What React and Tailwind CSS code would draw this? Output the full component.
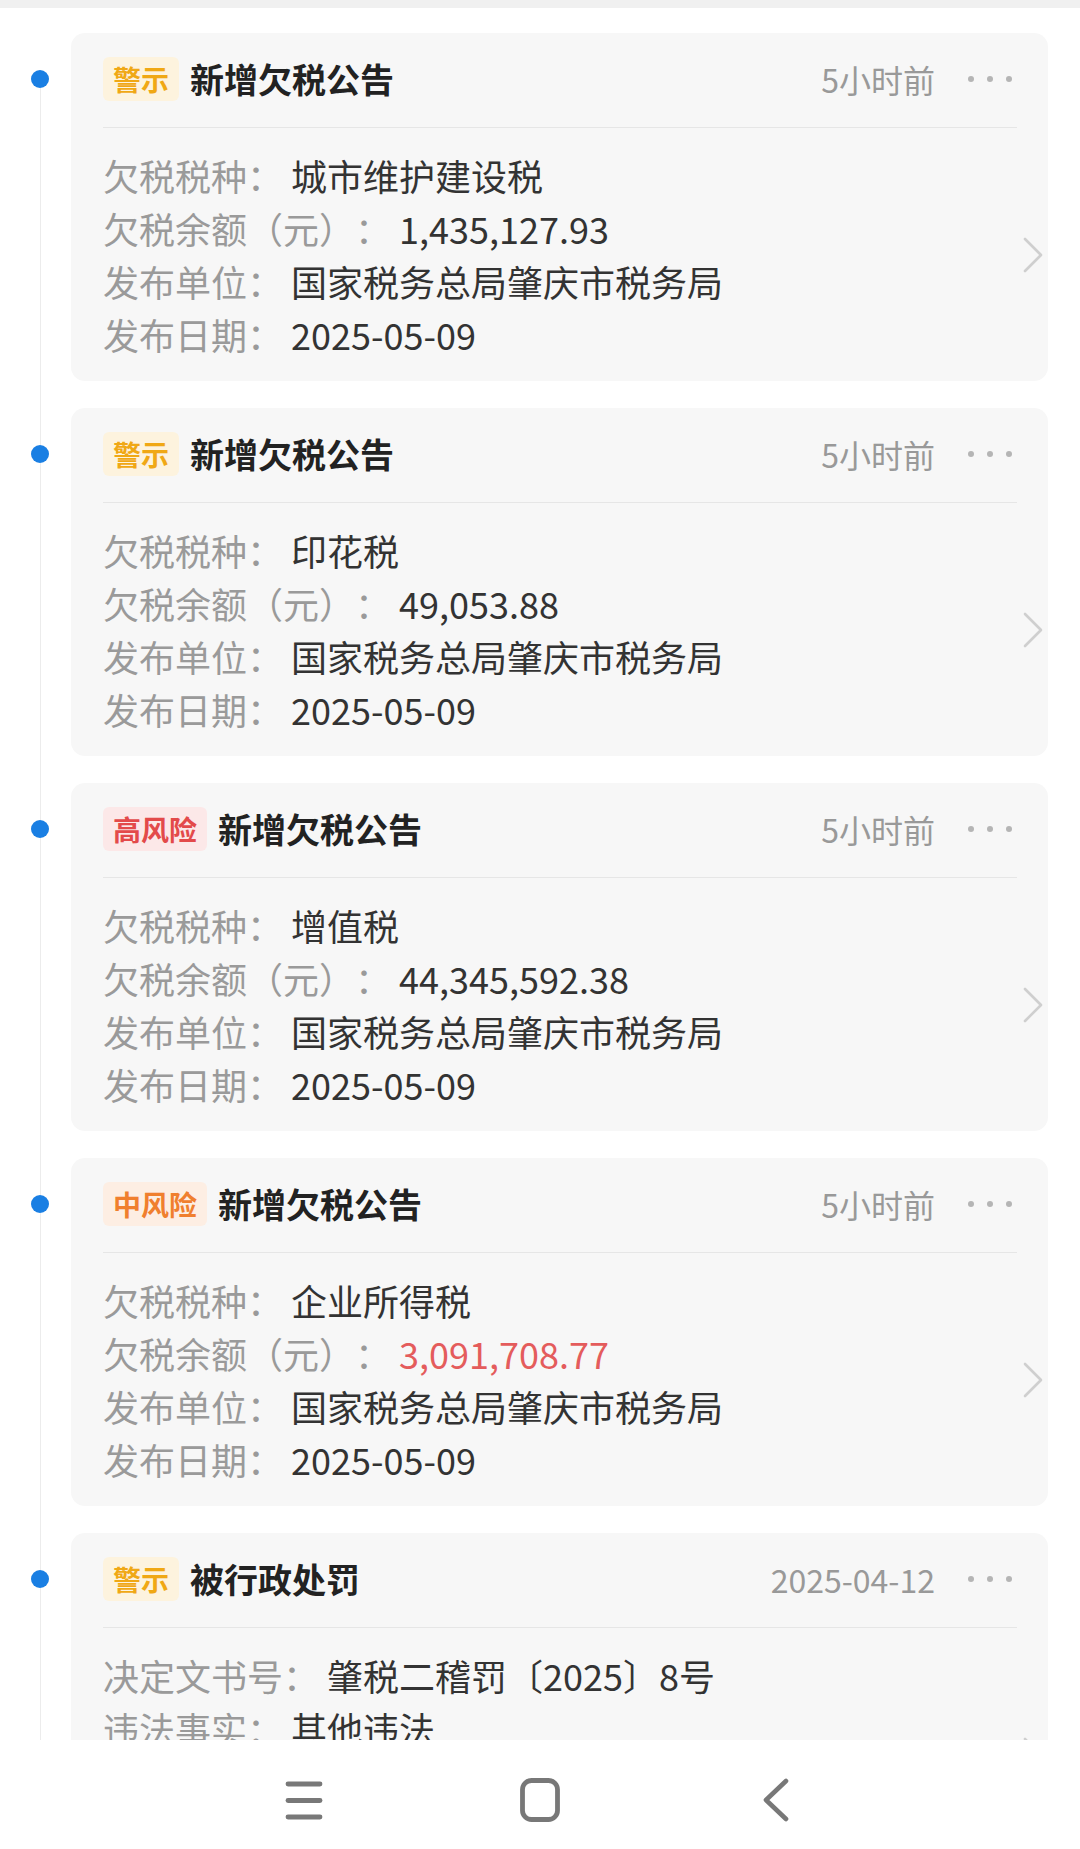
const tagStyles = {
  warn: "bg-[#fdf3de] text-[#f0a815]",
  high: "bg-[#fce8e8] text-[#e34a4a]",
  mid: "bg-[#fdeee3] text-[#f07f2e]",
};

const records = [
  {
    tag: "警示",
    tone: "warn",
    title: "新增欠税公告",
    time: "5小时前",
    rows: [
      ["欠税税种", "城市维护建设税"],
      ["欠税余额（元）", "1,435,127.93"],
      ["发布单位", "国家税务总局肇庆市税务局"],
      ["发布日期", "2025-05-09"],
    ],
  },
  {
    tag: "警示",
    tone: "warn",
    title: "新增欠税公告",
    time: "5小时前",
    rows: [
      ["欠税税种", "印花税"],
      ["欠税余额（元）", "49,053.88"],
      ["发布单位", "国家税务总局肇庆市税务局"],
      ["发布日期", "2025-05-09"],
    ],
  },
  {
    tag: "高风险",
    tone: "high",
    title: "新增欠税公告",
    time: "5小时前",
    rows: [
      ["欠税税种", "增值税"],
      ["欠税余额（元）", "44,345,592.38"],
      ["发布单位", "国家税务总局肇庆市税务局"],
      ["发布日期", "2025-05-09"],
    ],
  },
  {
    tag: "中风险",
    tone: "mid",
    title: "新增欠税公告",
    time: "5小时前",
    rows: [
      ["欠税税种", "企业所得税"],
      ["欠税余额（元）", "3,091,708.77", true],
      ["发布单位", "国家税务总局肇庆市税务局"],
      ["发布日期", "2025-05-09"],
    ],
  },
  {
    tag: "警示",
    tone: "warn",
    title: "被行政处罚",
    time: "2025-04-12",
    rows: [
      ["决定文书号", "肇税二稽罚〔2025〕8号"],
      ["违法事实", "其他违法"],
      ["处罚结果", "罚款"],
      ["处罚机关", "国家税务总局肇庆市税务局"],
    ],
  },
];

const Chevron = () => (
  <svg width="22" height="36" viewBox="0 0 22 36" fill="none">
    <path d="M3 2 L19 18 L3 34" stroke="#cfcfcf" strokeWidth="2.6" strokeLinecap="round" strokeLinejoin="round" />
  </svg>
);

const RecordCard = ({ item }) => (
  <div className="rounded-[14px] bg-[#f7f7f7] pl-[32px] pr-[31px]">
    {/* header */}
    <div className="flex items-center pt-[24px] pb-[26px] border-b border-[#e6e6e6]">
      <span
        className={`h-[44px] px-[10px] rounded-[6px] text-[28px] leading-[44px] font-bold ${tagStyles[item.tone]}`}
      >
        {item.tag}
      </span>
      <span className="ml-[11px] text-[34px] leading-[44px] font-bold text-[#222]">{item.title}</span>
      <span className="ml-auto text-[32px] leading-[44px] text-[#999]">{item.time}</span>
      <div className="ml-[33px] mr-[5px] flex items-center gap-[13px]">
        <span className="w-[6px] h-[6px] rounded-full bg-[#b5b5b5]" />
        <span className="w-[6px] h-[6px] rounded-full bg-[#b5b5b5]" />
        <span className="w-[6px] h-[6px] rounded-full bg-[#b5b5b5]" />
      </div>
    </div>
    {/* body */}
    <div className="relative pt-[21px] pb-[20px]">
      {item.rows.map(([label, value, red]) => (
        <div key={label} className="flex text-[36px] leading-[53px] whitespace-nowrap">
          <span className="text-[#9a9a9a]">{label}：</span>
          <span className={`ml-[8px] ${red ? "text-[#e45c5c]" : "text-[#333]"}`}>{value}</span>
        </div>
      ))}
      <div className="absolute -right-[27px] top-1/2 -translate-y-1/2">
        <Chevron />
      </div>
    </div>
  </div>
);

const NavBar = () => (
  <div className="h-[109px] shrink-0 bg-white flex justify-center items-center pt-[10px]">
    <div className="w-[236px] flex justify-center">
      <svg width="40" height="40" viewBox="0 0 40 40">
        <g stroke="#787878" strokeWidth="4.8" strokeLinecap="round">
          <path d="M4 4 H36" />
          <path d="M4 20.5 H36" />
          <path d="M4 37 H36" />
        </g>
      </svg>
    </div>
    <div className="w-[236px] flex justify-center">
      <svg width="40" height="44" viewBox="0 0 40 44">
        <rect x="2.5" y="2.5" width="35" height="39" rx="9" fill="none" stroke="#787878" strokeWidth="4.8" />
      </svg>
    </div>
    <div className="w-[236px] flex justify-center">
      <svg width="28" height="44" viewBox="0 0 28 44" fill="none">
        <path d="M24 3 L4 22 L24 41" stroke="#787878" strokeWidth="4.6" strokeLinecap="round" strokeLinejoin="round" />
      </svg>
    </div>
  </div>
);

export default function App() {
  return (
    <div className="w-[1080px] h-[1849px] bg-white flex flex-col overflow-hidden [text-spacing-trim:space-all] font-['Noto_Sans_CJK_SC','Noto_Sans',sans-serif]">
      <div className="h-[8px] shrink-0 bg-[#f0f0f0]" />
      <div className="flex-1 overflow-hidden pt-[25px] pr-[32px]">
        {records.map((item, i) => (
          <div key={i} className="flex">
            {/* timeline */}
            <div className="w-[71px] shrink-0 pl-[31px]">
              <div className="w-[18px] h-full flex flex-col items-center">
                <div className={`w-px h-[37px] ${i === 0 ? "bg-transparent" : "bg-[#ececec]"}`} />
                <div className="w-[18px] h-[18px] rounded-full bg-[#1a7fe3] shrink-0" />
                <div className="w-px flex-1 bg-[#ececec]" />
              </div>
            </div>
            <div className="flex-1 pb-[27px]">
              <RecordCard item={item} />
            </div>
          </div>
        ))}
      </div>
      <NavBar />
    </div>
  );
}
